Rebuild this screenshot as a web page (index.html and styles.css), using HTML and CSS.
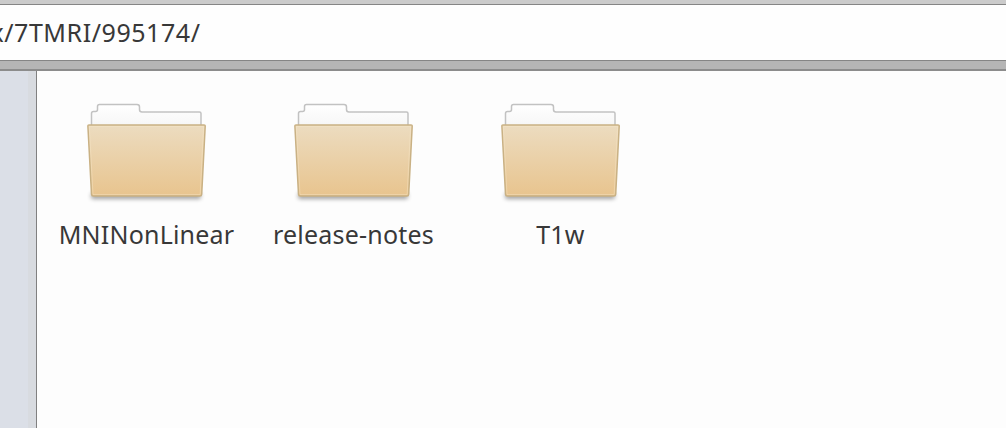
FILE: index.html
```html
<!DOCTYPE html>
<html lang="en">
<head>
  <meta charset="UTF-8">
  <title>995174</title>
  <link rel="stylesheet" href="styles.css">
</head>
<body>
  <!-- Shared folder icon -->
  <svg class="defs" width="0" height="0">
    <defs>
      <linearGradient id="front" x1="0" y1="0" x2="0" y2="1">
        <stop offset="0" stop-color="#ecdcc0"/>
        <stop offset="1" stop-color="#e8c48e"/>
      </linearGradient>
      <linearGradient id="back" x1="0" y1="0" x2="0" y2="1">
        <stop offset="0" stop-color="#ffffff"/>
        <stop offset="1" stop-color="#f6f6f6"/>
      </linearGradient>
      <filter id="blur" x="-10%" y="-100%" width="120%" height="300%">
        <feGaussianBlur stdDeviation="2"/>
      </filter>
    </defs>
    <symbol id="folder" viewBox="0 0 140 115">
      <rect x="15" y="99" width="110" height="6" rx="2" fill="#000" opacity=".36" filter="url(#blur)"/>
      <path d="M15.500 32V19.500q0-2 2-2h2q2 0 2-2v-3q0-2 2-2H61q2.500 0 2.500 2.500v2.500q0 2.500 2.500 2.500h57.500q1.500 0 1.500 1.500V32z" fill="url(#back)" stroke="#c2c2c2" stroke-width="1.500"/>
      <path d="M13 31H128q1.300 0 1.200 1.300L125.700 100.200q-.1 1.800-1.800 1.800H17.300q-1.700 0-1.800-1.800L11.900 32.300q-.1-1.300 1.100-1.300z" fill="url(#front)" stroke="#c9b184" stroke-width="1.500"/>
      <path d="M13.300 32.500H127.600L124.200 100.500H17z" fill="none" stroke="#f7e8cb" stroke-opacity=".4"/>
    </symbol>
  </svg>

  <div class="window">
    <header class="location-bar">
      <div class="location">x/7TMRI/995174/</div>
    </header>
    <div class="content">
      <aside class="sidebar"></aside>
      <main class="files">
        <div class="file">
          <svg class="icon"><use href="#folder"/></svg>
          <span class="name">MNINonLinear</span>
        </div>
        <div class="file">
          <svg class="icon"><use href="#folder"/></svg>
          <span class="name">release-notes</span>
        </div>
        <div class="file">
          <svg class="icon"><use href="#folder"/></svg>
          <span class="name">T1w</span>
        </div>
      </main>
    </div>
  </div>
</body>
</html>
```

FILE: styles.css
```css
* {
  margin: 0;
  padding: 0;
  box-sizing: border-box;
}
body {
  height: 100vh;
  overflow: hidden;
  background: #fdfdfd;
  color: #383838;
  font-family: "Noto Sans", sans-serif;
  font-size: 25px;
}
.defs {
  display: block;
}
.window {
  height: 100vh;
  display: flex;
  flex-direction: column;
}

/* Location bar */
.location-bar {
  height: 71px;
  padding-bottom: 9px;
  background: #b5b5b5;
  border-top: 4px solid #cbcbcb;
  border-bottom: 2px solid #8c8c8c;
}
.location {
  display: flex;
  justify-content: flex-end;
  height: 57px;
  padding-right: 805.5px;
  overflow: hidden;
  white-space: nowrap;
  letter-spacing: 0.55px;
  line-height: 54px;
  background: #fefefe;
  border-top: 1px solid #858585;
  border-bottom: 1px solid #858585;
}

/* Sidebar and files */
.content {
  flex: 1;
  display: flex;
}
.sidebar {
  width: 37px;
  background: linear-gradient(to right, #dbdfe7 28px, #d8dbe0 28px);
  border-right: 1px solid #808080;
}
.files {
  flex: 1;
  display: flex;
  align-items: flex-start;
  padding: 23px 0 0 5px;
}
.file {
  width: 207px;
  display: flex;
  flex-direction: column;
  align-items: center;
}
.icon {
  width: 140px;
  height: 115px;
}
.name {
  margin-top: 8px;
  padding-left: 2px;
  line-height: 34px;
  letter-spacing: 0.2px;
}
```
